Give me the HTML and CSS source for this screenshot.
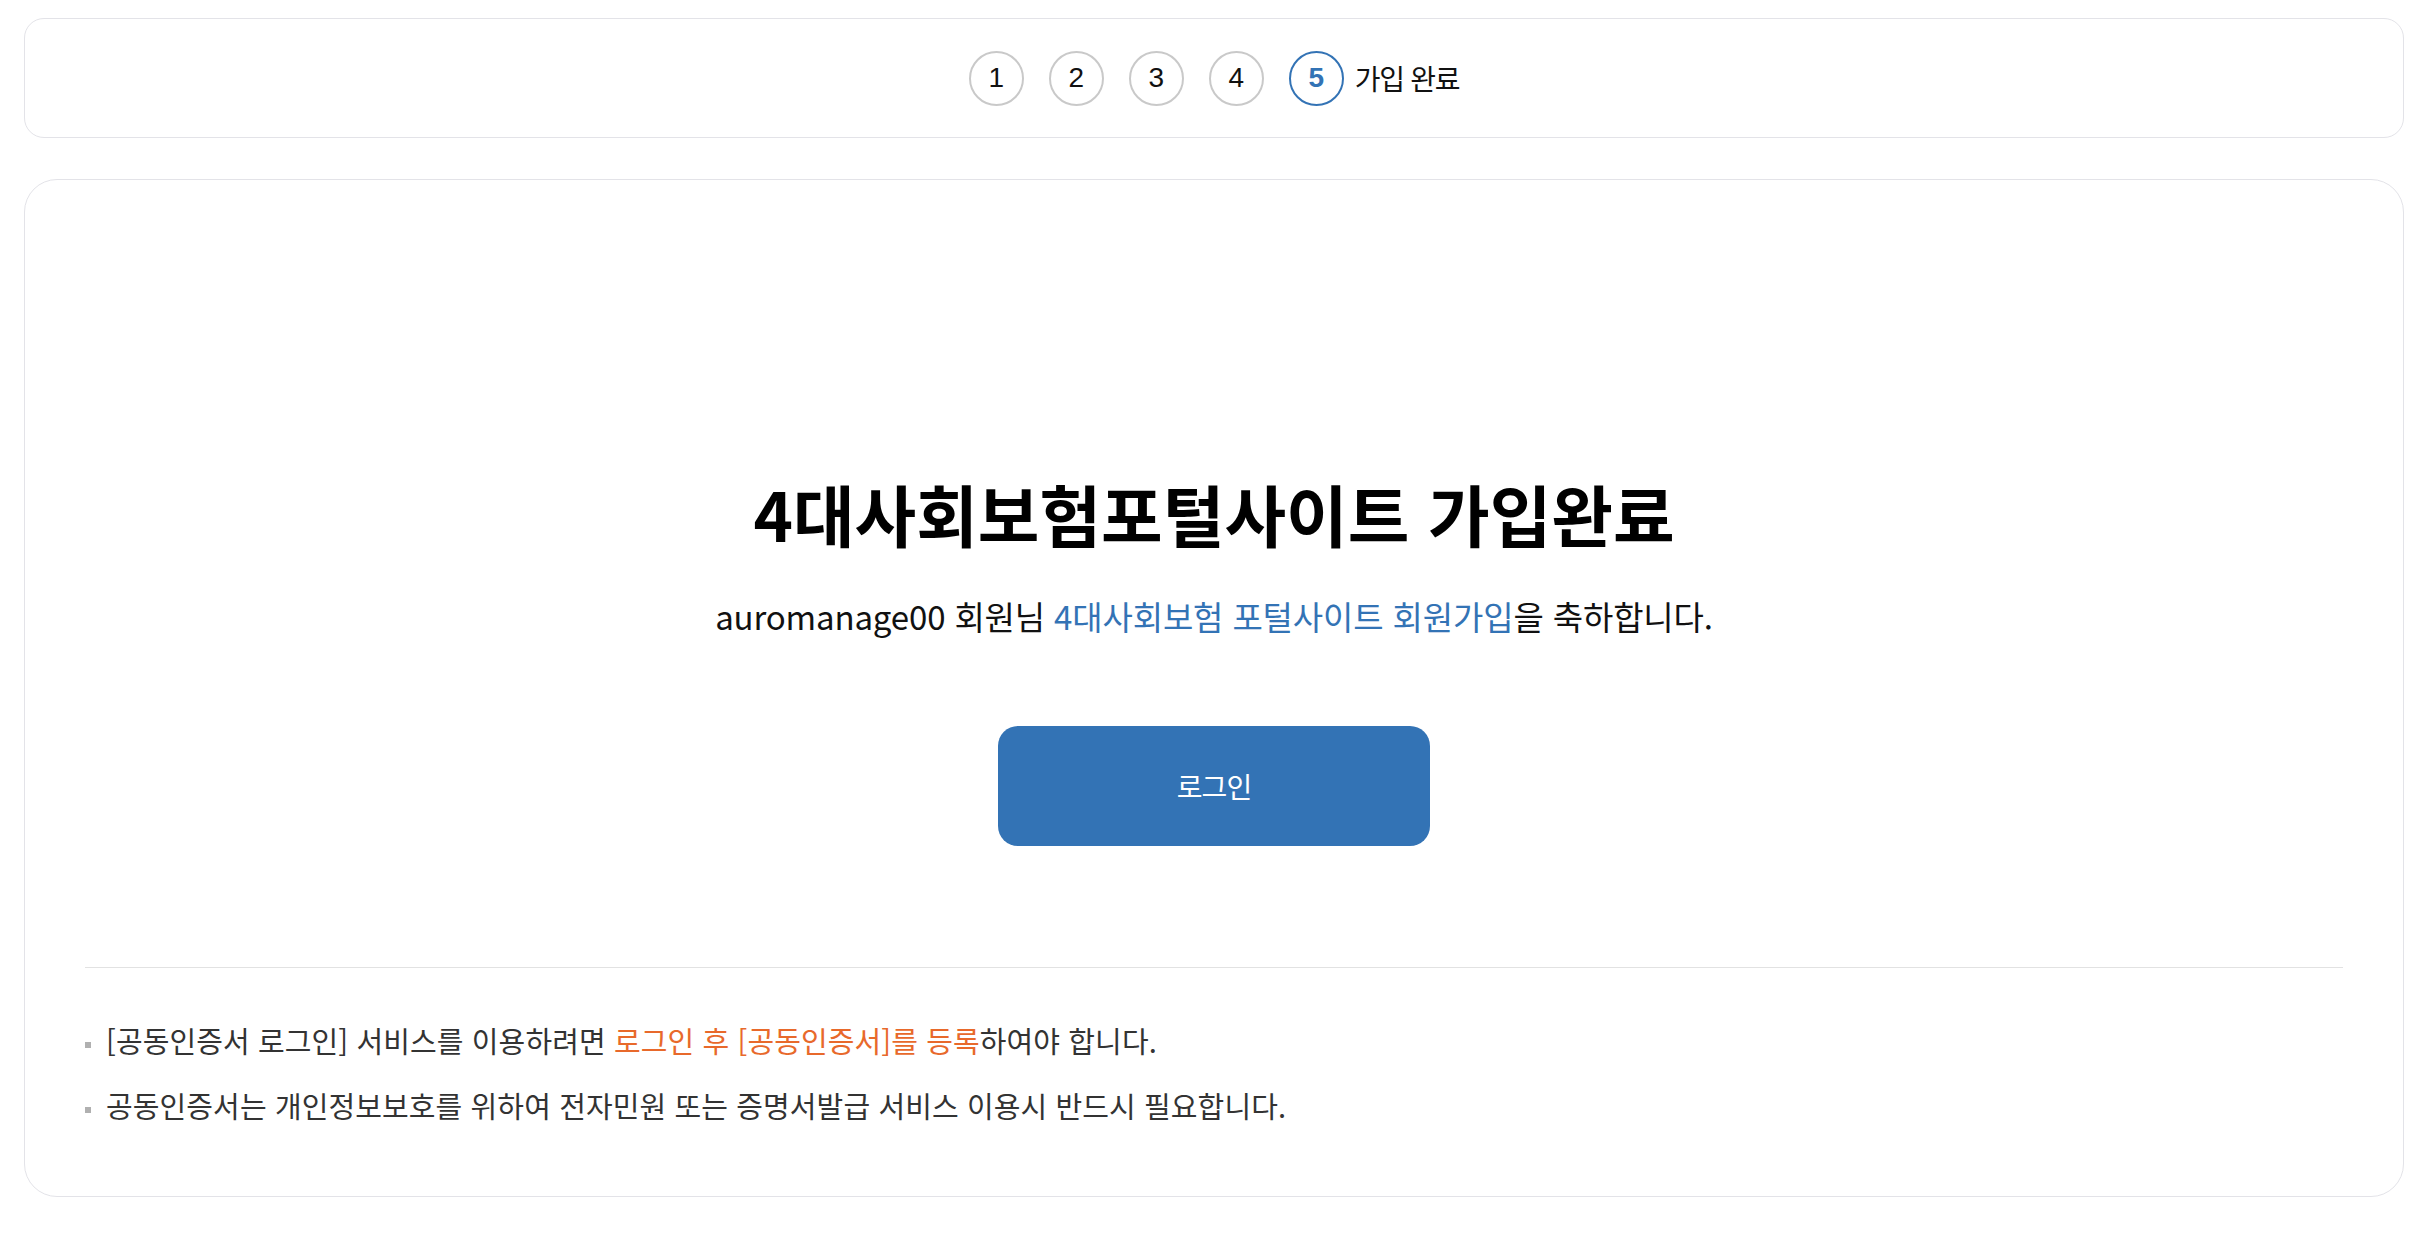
FILE: index.html
```html
<!DOCTYPE html>
<html lang="ko">
<head>
<meta charset="utf-8">
<title>가입완료</title>
<link rel="stylesheet" href="styles.css">
</head>
<body>
<div class="page">
  <div class="steps-box">
    <ol class="steps">
      <li class="step">1</li>
      <li class="step">2</li>
      <li class="step">3</li>
      <li class="step">4</li>
      <li class="step step-active">5</li>
      <li class="step-label">가입 완료</li>
    </ol>
  </div>
  <div class="main-box">
    <h1 class="title">4대사회보험포털사이트 가입완료</h1>
    <p class="subtitle">auromanage00 회원님 <span class="hl-blue">4대사회보험 포털사이트 회원가입</span>을 축하합니다.</p>
    <button class="login-btn" type="button">로그인</button>
    <hr class="divider">
    <ul class="notes">
      <li class="note">[공동인증서 로그인] 서비스를 이용하려면 <span class="hl-orange">로그인 후 [공동인증서]를 등록</span>하여야 합니다.</li>
      <li class="note">공동인증서는 개인정보보호를 위하여 전자민원 또는 증명서발급 서비스 이용시 반드시 필요합니다.</li>
    </ul>
  </div>
</div>
</body>
</html>
```
FILE: styles.css
```css
* { box-sizing: border-box; }
html, body { margin: 0; padding: 0; background: #ffffff; }
body {
  font-family: "Noto Sans CJK KR", "Noto Sans", sans-serif;
  color: #111;
}
.page {
  padding: 18px 32px 0 24px;
  display: flex;
  flex-direction: column;
  gap: 41px;
}
.steps-box {
  height: 120px;
  border: 1px solid #e3e3e8;
  border-radius: 20px;
  display: flex;
  align-items: center;
  justify-content: center;
}
.steps {
  list-style: none;
  margin: 0;
  padding: 0;
  display: flex;
  align-items: center;
  gap: 25px;
}
.step {
  width: 55px;
  height: 55px;
  border: 2px solid #c9c9c9;
  border-radius: 50%;
  display: flex;
  align-items: center;
  justify-content: center;
  font-family: "Liberation Sans", Arial, sans-serif;
  font-size: 28px;
  color: #111;
}
.step-active {
  border-color: #3373b5;
  color: #3373b5;
  font-weight: bold;
}
.step-label {
  margin-left: -14px;
  font-size: 28px;
  letter-spacing: -1.3px;
  color: #111;
}
.main-box {
  border: 1px solid #e3e3e8;
  border-radius: 33px;
  padding: 294px 60px 71px;
  display: flex;
  flex-direction: column;
  align-items: center;
}
.title {
  margin: 0;
  font-size: 67px;
  line-height: 78px;
  font-weight: 700;
  letter-spacing: 0;
  color: #000;
}
.subtitle {
  margin: 44px 0 0;
  font-size: 33px;
  line-height: 40px;
  letter-spacing: -0.15px;
  color: #111;
}
.hl-blue { color: #3373b5; }
.hl-orange { color: #e8692b; }
.login-btn {
  margin-top: 90px;
  width: 432px;
  height: 120px;
  border: none;
  border-radius: 20px;
  background: #3373b5;
  color: #fff;
  font-family: "Noto Sans CJK KR", "Noto Sans", sans-serif;
  font-size: 28px;
  letter-spacing: -1px;
}
.divider {
  align-self: stretch;
  margin: 121px 0 0;
  border: none;
  border-top: 1px solid #e2e2e2;
  height: 0;
}
.notes {
  align-self: stretch;
  list-style: none;
  margin: 52px 0 0;
  padding: 0;
  display: flex;
  flex-direction: column;
  gap: 25px;
}
.note {
  position: relative;
  padding-left: 21px;
  font-size: 29px;
  line-height: 40px;
  color: #333;
  letter-spacing: 0.1px;
}
.note::before {
  content: "";
  position: absolute;
  left: 0;
  top: 22px;
  width: 6px;
  height: 6px;
  background: #b0b0b0;
}
```
